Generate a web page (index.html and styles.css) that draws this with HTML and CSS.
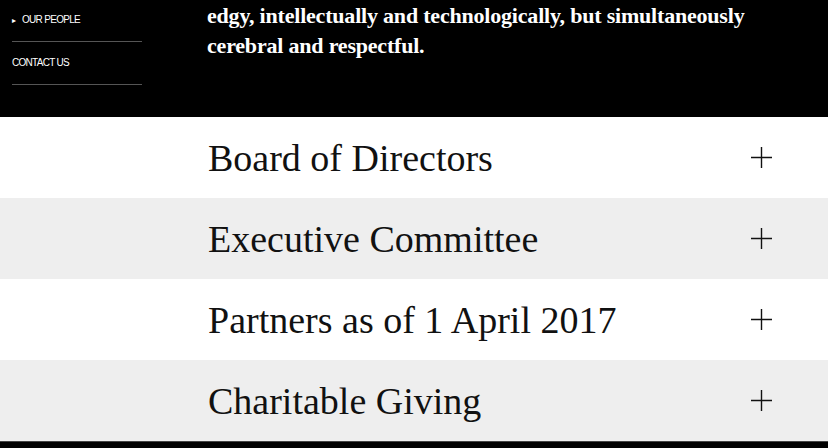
FILE: index.html
```html
<!DOCTYPE html>
<html>
    <head>
        <title>Our People</title>
        <link rel="stylesheet" href="styles.css">
    </head>
    <body>
        <div class="top">
            <ul class="side_nav">
                <li class="current"><span class="arrow">&#9656;</span>OUR PEOPLE</li>
                <li>CONTACT US</li>
            </ul>
            <p class="intro">edgy, intellectually and technologically, but simultaneously<br>cerebral and respectful.</p>
        </div>
        <div class="acc_row">
            <h2>Board of Directors</h2>
            <svg class="plus" width="21" height="21" viewBox="0 0 21 21"><path d="M0 10.5H21M10.5 0V21" stroke="#111" stroke-width="1.4" fill="none"/></svg>
        </div>
        <div class="acc_row grey">
            <h2>Executive Committee</h2>
            <svg class="plus" width="21" height="21" viewBox="0 0 21 21"><path d="M0 10.5H21M10.5 0V21" stroke="#111" stroke-width="1.4" fill="none"/></svg>
        </div>
        <div class="acc_row">
            <h2>Partners as of 1 April 2017</h2>
            <svg class="plus" width="21" height="21" viewBox="0 0 21 21"><path d="M0 10.5H21M10.5 0V21" stroke="#111" stroke-width="1.4" fill="none"/></svg>
        </div>
        <div class="acc_row grey">
            <h2>Charitable Giving</h2>
            <svg class="plus" width="21" height="21" viewBox="0 0 21 21"><path d="M0 10.5H21M10.5 0V21" stroke="#111" stroke-width="1.4" fill="none"/></svg>
        </div>
        <div class="bottom"></div>
    </body>
</html>
```

FILE: styles.css
```css
body {
	margin: 0;
	background: #000;
	font-family: "Liberation Serif", serif;
}
.top {
	display: flex;
	height: 117px;
	background: #000;
	color: #fff;
}
.side_nav {
	list-style: none;
	margin: -1px 0 0 12px;
	padding: 0;
	width: 130px;
	font-family: "Liberation Sans", Arial, sans-serif;
	font-size: 10px;
	letter-spacing: -0.7px;
}
.side_nav li {
	height: 42px;
	line-height: 42px;
	border-bottom: 1px solid #555;
}
.side_nav .arrow {
	font-size: 8px;
	margin-right: 6px;
	letter-spacing: 0;
}
.intro {
	margin: 0 0 0 65px;
	padding-top: 1px;
	font-size: 22px;
	line-height: 30px;
	font-weight: bold;
	letter-spacing: -0.2px;
}
.acc_row {
	display: flex;
	align-items: center;
	justify-content: space-between;
	height: 81px;
	padding: 0 56px 0 208px;
	background: #fff;
}
.acc_row.grey {
	background: #eeeeee;
}
.acc_row h2 {
	margin: 0;
	font-size: 38px;
	font-weight: normal;
	color: #111;
}
.bottom {
	height: 7px;
	border-top: 1px solid #444;
	background: #000;
}
```
